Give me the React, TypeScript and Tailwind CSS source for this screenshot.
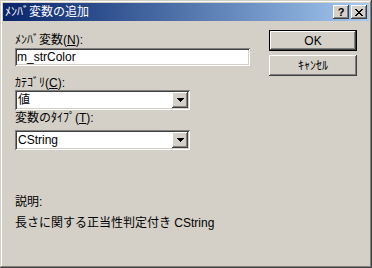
import React from "react";

const font = { fontFamily: '"Liberation Sans", "Noto Sans CJK JP", sans-serif' };

const raised =
  "shadow-[inset_-1px_-1px_#404040,inset_1px_1px_#ffffff,inset_-2px_-2px_#808080,inset_2px_2px_#d4d0c8]";
const sunken =
  "shadow-[inset_1px_1px_#808080,inset_-1px_-1px_#ffffff,inset_2px_2px_#404040,inset_-2px_-2px_#d4d0c8]";

function Combo({ value }: { value: string }) {
  return (
    <div className={`flex h-[20px] w-[175px] items-center bg-white p-[2px] ${sunken}`}>
      <div className="flex-1 pl-[1px] text-[12px] leading-[16px] text-black">{value}</div>
      <div className={`flex h-[16px] w-[16px] items-center justify-center bg-[#d4d0c8] ${raised}`}>
        <svg width="7" height="4" viewBox="0 0 7 4">
          <path d="M0 0h7v1h-1v1h-1v1h-1v1h-1v-1h-1v-1h-1v-1h-1z" fill="#000" />
        </svg>
      </div>
    </div>
  );
}

export default function App() {
  return (
    <div
      className="flex h-[268px] w-[372px] flex-col bg-[#d4d0c8] p-[3px] shadow-[inset_-1px_-1px_#404040,inset_1px_1px_#d4d0c8,inset_-2px_-2px_#808080,inset_2px_2px_#ffffff]"
      style={font}
    >
      <div className="flex h-[18px] items-center bg-gradient-to-r from-[#0a246a] to-[#a6caf0] pl-[2px] pr-[2px]">
        <div className="flex-1 text-[12px] leading-[14px] text-white">ﾒﾝﾊﾞ変数の追加</div>
        <div className={`flex h-[14px] w-[16px] items-center justify-center bg-[#d4d0c8] ${raised}`}>
          <span className="text-[11px] font-bold leading-[11px] text-black" style={{ fontFamily: '"Liberation Sans", sans-serif' }}>?</span>
        </div>
        <div className={`ml-[2px] flex h-[14px] w-[16px] items-center justify-center bg-[#d4d0c8] ${raised}`}>
          <svg width="8" height="7" viewBox="0 0 8 7">
            <path d="M0 0h2v1h1v1h2v-1h1v-1h2v1h-1v1h-1v1h-1v1h1v1h1v1h1v1h-2v-1h-1v-1h-2v1h-1v1h-2v-1h1v-1h1v-1h1v-1h-1v-1h-1v-1h-1z" fill="#000" />
          </svg>
        </div>
      </div>
      <div className="flex flex-1 flex-row text-[12px] text-black">
        <div className="flex w-[247px] flex-col pl-[12px] pt-[13px]">
          <div className="leading-[12px]">ﾒﾝﾊﾞ変数(<u>N</u>):</div>
          <div className={`mt-[2px] flex h-[18px] w-[235px] items-center bg-white px-[2px] ${sunken}`}>
            <span className="leading-[14px]">m_strColor</span>
          </div>
          <div className="mt-[11px] leading-[12px]">ｶﾃｺﾞﾘ(<u>C</u>):</div>
          <div className="mt-[1px]">
            <Combo value="値" />
          </div>
          <div className="mt-[2px] leading-[12px]">変数のﾀｲﾌﾟ(<u>T</u>):</div>
          <div className="mt-[6px]">
            <Combo value="CString" />
          </div>
          <div className="mt-[46px] leading-[12px]">説明:</div>
          <div className="mt-[9px] whitespace-nowrap leading-[12px]">長さに関する正当性判定付き CString</div>
        </div>
        <div className="ml-[19px] flex flex-col pt-[9px]">
          <div className="h-[21px] w-[88px] border border-black">
            <div className={`flex h-full w-full items-center justify-center bg-[#d4d0c8] ${raised}`}>
              <span className="leading-[12px]">OK</span>
            </div>
          </div>
          <div className={`mt-[4px] flex h-[21px] w-[88px] items-center justify-center bg-[#d4d0c8] ${raised}`}>
            <span className="leading-[12px]">ｷｬﾝｾﾙ</span>
          </div>
        </div>
      </div>
    </div>
  );
}
